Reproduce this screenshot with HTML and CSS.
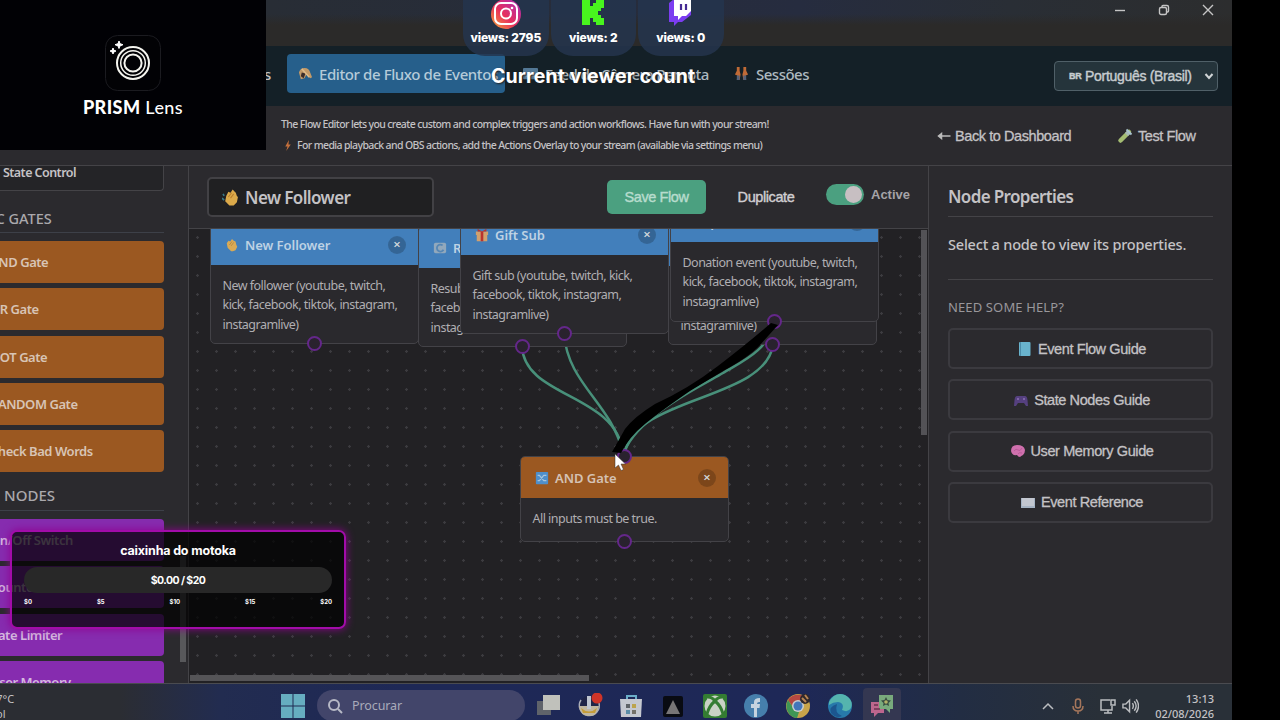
FILE: index.html
```html
<!DOCTYPE html>
<html lang="pt-BR">
<head>
    <meta charset="UTF-8">
    <meta name="viewport" content="width=device-width, initial-scale=1.0">
    <title>Editor de Fluxo de Eventos</title>
    <link rel="stylesheet" href="styles.css">
</head>
<body>

<div class="app">
    <!-- Window bar -->
    <div class="titlebar">
        <svg class="winbtn" viewBox="0 0 12 12"><path d="M1 6.5h10"/></svg>
        <svg class="winbtn" viewBox="0 0 12 12"><rect x="1.5" y="3.5" width="7" height="7" rx="1.5"/><path d="M4 3V2.5Q4 1.5 5 1.5h4q1.500 0 1.500 1.500v4q0 1-1 1H9"/></svg>
        <svg class="winbtn" viewBox="0 0 12 12"><path d="M1 1l10 10M11 1L1 11"/></svg>
    </div>

    <!-- Navigation -->
    <div class="nav">
        <span class="nav-prev">s</span>
        <div class="tab active">
            <svg class="emo" viewBox="0 0 16 16"><path d="M1 7q1-5 6-5 5 0 6 5l2 5-2 1-4-4-2 4-4 1z" fill="#c39a68"/><path d="M4 7l4 1-2 5-3-2z" fill="#3a2d2a"/><path d="M4 3l8 9" stroke="#e0bd8a" stroke-width="1.500"/></svg>
            <span class="t-tab">Editor de Fluxo de Eventos</span>
        </div>
        <div class="tab cam">
            <svg class="emo" viewBox="0 0 16 16"><rect x="0" y="2" width="16" height="12" rx="1" fill="#537895"/><path d="M2 12l4-5 3 3 2-2 3 4z" fill="#8199aa"/></svg>
            <span class="t-cam">Feed de Câmera Remota</span>
        </div>
        <div class="tab ses">
            <svg class="emo" viewBox="0 0 16 16"><path d="M3 1h3v4l1 4-1 6H3l.5-5L1 9l2-4zM10 1h3v4l2 4-2.500 1 .5 5h-3L9 9l1-4z" fill="#c06a36"/><path d="M3 10h3v5H3zM10 10h3v5h-3z" fill="#54627a"/></svg>
            <span class="t-ses">Sessões</span>
        </div>
        <div class="lang">
            <span class="flag">BR</span>
            <span class="t-lang">Português (Brasil)</span>
            <svg class="chev" viewBox="0 0 10 10"><path d="M1.500 3l3.500 4 3.500-4"/></svg>
        </div>
    </div>

    <!-- Description -->
    <div class="info">
        <div class="info-text">
            <div class="t-info">The Flow Editor lets you create custom and complex triggers and action workflows. Have fun with your stream!</div>
            <div class="info-line">
                <svg class="bolt" viewBox="0 0 8 12"><path d="M5 0L1 7h2.500L2 12l5-7H4.500z" fill="#c5703c"/></svg>
                <span class="t-info">For media playback and OBS actions, add the Actions Overlay to your stream (available via settings menu)</span>
            </div>
        </div>
        <div class="back">
            <svg class="arrow" viewBox="0 0 13 8"><path d="M4 1.500L1 4l3 2.500zM2 4h11" /></svg>
            <span>Back to Dashboard</span>
        </div>
        <div class="test">
            <svg class="tube" viewBox="0 0 16 16"><path d="M3.500 12.500L12 4" stroke="#a4bc72" stroke-width="4.500" stroke-linecap="round"/><path d="M9.500 6.500L12 4" stroke="#a7b9b7" stroke-width="4.500"/><path d="M9.500 1.500l5 5" stroke="#a9c3cf" stroke-width="1.800"/></svg>
            <span>Test Flow</span>
        </div>
    </div>

    <div class="main">
        <!-- Node palette -->
        <div class="sidebar">
            <div class="ctrl"><span>State Control</span></div>
            <h4 class="gates-title"><span>LOGIC GATES</span></h4>
            <div class="list">
                <div class="item gate"><span>AND Gate</span></div>
                <div class="item gate"><span>OR Gate</span></div>
                <div class="item gate"><span>NOT Gate</span></div>
                <div class="item gate"><span>RANDOM Gate</span></div>
                <div class="item gate"><span>Check Bad Words</span></div>
            </div>
            <h4 class="nodes-title"><span>STATE NODES</span></h4>
            <div class="list">
                <div class="item state"><span>On/Off Switch</span></div>
                <div class="item state"><span>Counter</span></div>
                <div class="item state"><span>Rate Limiter</span></div>
                <div class="item state"><span>User Memory</span></div>
            </div>
            <div class="side-scroll"></div>
        </div>

        <!-- Flow editor -->
        <div class="editor">
            <div class="toolbar">
                <div class="flow-name">
                    <svg class="emo" viewBox="0 0 16 16"><path d="M4 7l2-4 2 1 2-3 2 2 1 1 1 3 1 1-1 5-3 3H7l-4-4z" fill="#dba94a"/><path d="M6 8l3-4M8 9l3-4" stroke="#b97e2d"/><path d="M1 5l1 2M0 9l2 2" stroke="#397a88" stroke-width="1.500"/></svg>
                    <span class="t-flow">New Follower</span>
                </div>
                <div class="save"><span>Save Flow</span></div>
                <div class="dup"><span>Duplicate</span></div>
                <div class="switch"><div class="knob"></div></div>
                <span class="t-active">Active</span>
            </div>
            <div class="canvas">
                <svg class="wires" viewBox="189 229 740 454">
                    <path d="M522 346C524 398 615 393 623 452"/>
                    <path d="M564 334C568 384 610 402 623 452"/>
                    <path d="M774 321C770 350 741 362 723 373S640 414 624 452"/>
                    <path d="M773 345C765 400 637 396 625 452"/>
                </svg>

                <div class="node follower">
                    <div class="head blue">
                        <svg class="emo" viewBox="0 0 16 16"><path d="M2 6l2-3 2 1 2-3 2 2 2 1 1 4 1 2-2 4-3 1H7l-4-4z" fill="#d9aa55"/><path d="M5 8l3-4M7 9l3-4" stroke="#b3863f"/></svg>
                        <span>New Follower</span><i class="close">×</i>
                    </div>
                    <p>New follower (youtube, twitch,<br>kick, facebook, tiktok, instagram,<br>instagramlive)</p>
                    <b class="port out"></b>
                </div>

                <div class="node resub">
                    <div class="head blue">
                        <svg class="emo" viewBox="0 0 16 16"><rect x="1" y="2" width="14" height="12" rx="2" fill="#91a8bc"/><path d="M11 5a4 4 0 1 0 1 5" fill="none" stroke="#5586b4" stroke-width="2"/></svg>
                        <span>Resub</span>
                    </div>
                    <p>Resub (youtube, twitch,<br>facebook, tiktok,<br>instagramlive)</p>
                    <b class="port out"></b>
                </div>

                <div class="node gift">
                    <div class="head blue">
                        <svg class="emo" viewBox="0 0 16 16"><path d="M1 4h14v4H1zM2 8h12v7H2z" fill="#d1a06e"/><path d="M6.500 4h3v11h-3zM3 1l5 3 5-3v3H3z" fill="#b8322e"/></svg>
                        <span>Gift Sub</span><i class="close">×</i>
                    </div>
                    <p>Gift sub (youtube, twitch, kick,<br>facebook, tiktok, instagram,<br>instagramlive)</p>
                    <b class="port out"></b>
                </div>

                <div class="node under">
                    <div class="head blue"></div>
                    <p><br><br>instagramlive)</p>
                    <b class="port out"></b>
                </div>

                <div class="node donation">
                    <div class="head blue"><span class="t-dn">Superchat</span><i class="close">×</i></div>
                    <p>Donation event (youtube, twitch,<br>kick, facebook, tiktok, instagram,<br>instagramlive)</p>
                    <b class="port out"></b>
                </div>

                <div class="node and">
                    <div class="head orange">
                        <svg class="emo" viewBox="0 0 16 16"><rect x="1" y="1" width="14" height="14" rx="1" fill="#4f8fca"/><path d="M3 5h2l5 6h3M3 11h2l5-6h3" fill="none" stroke="#a8c6dd" stroke-width="1.300"/></svg>
                        <span>AND Gate</span><i class="close">×</i>
                    </div>
                    <p>All inputs must be true.</p>
                    <b class="port in"></b>
                    <b class="port out"></b>
                </div>

                <svg class="drag" viewBox="189 229 740 454">
                    <path d="M771 323Q748 343 718 366T655 404Q634 417 625 429L612 452L621 453Q629 437 645 424T690 391L723 371Q749 357 760 345L778 325Z"/>
                </svg>
                <div class="vscroll"></div>
                <div class="hscroll"></div>
            </div>
        </div>

        <!-- Properties -->
        <div class="props">
            <h3><span>Node Properties</span></h3>
            <div class="props-msg"><span>Select a node to view its properties.</span></div>
            <div class="help-title"><span>NEED SOME HELP?</span></div>
            <div class="guides">
                <div class="guide"><svg viewBox="0 0 14 16"><rect x="1" y="1" width="11.500" height="14" rx="1" fill="#69b3cd"/><path d="M2.500 1v14" stroke="#4b8ba8"/></svg><span>Event Flow Guide</span></div>
                <div class="guide"><svg viewBox="0 0 14 16"><path d="M3 4h8q2 0 2.500 4l.5 6h-2l-2-3H4l-2 3H0l.5-6Q1 4 3 4z" fill="#55407f"/><circle cx="4" cy="7" r="1" fill="#8c70b4"/><circle cx="10" cy="7" r="1" fill="#8c70b4"/></svg><span>State Nodes Guide</span></div>
                <div class="guide"><svg viewBox="0 0 14 16"><path d="M0 8q0-6 6-6 7 0 8 5 0 3-2 5-2 1-3 2-2 0-3-2-5 1-6-4z" fill="#cf70ad"/><path d="M3 8q2-3 4-1t4-2M7 11q1-2 4-1" fill="none" stroke="#b95a99"/></svg><span>User Memory Guide</span></div>
                <div class="guide"><svg viewBox="0 0 14 16"><path d="M0 4h14v10H0z" fill="#a6b4c4"/><path d="M1 4h6v8H1zM7 4h6v8H7z" fill="#c3c7d0"/></svg><span>Event Reference</span></div>
            </div>
        </div>
    </div>

    <!-- Taskbar -->
    <div class="taskbar">
        <div class="weather"><span>27°C</span><span>Sol</span></div>
        <svg class="win" viewBox="0 0 24 24"><path d="M0 0h11.500v11.500H0zM12.500 0H24v11.500H12.500zM0 12.500h11.500V24H0zM12.500 12.500H24V24H12.500z" fill="#66adc0"/></svg>
        <div class="search">
            <svg viewBox="0 0 16 16"><circle cx="7" cy="7" r="5"/><path d="M11 11l4 4"/></svg>
            <span>Procurar</span>
        </div>
        <div class="icons">
            <svg viewBox="0 0 26 26"><path d="M2 8h14v14H2z" fill="#5f636a"/><path d="M8 2h17v15H8z" fill="#c0c1bb"/></svg>
            <svg viewBox="0 0 26 26"><circle cx="12" cy="13" r="10" fill="#202548"/><path d="M4 7a10 10 0 1 0 18 3" fill="none" stroke="#a9adba" stroke-width="1.500"/><path d="M2 13h20q-1 10-10 10T2 13z" fill="#c0b6a0"/><path d="M4 15q8 7 16 0l-2 5H6z" fill="#c59c38"/><path d="M10 3h4v13h-4z" fill="#bfc5d0"/><circle cx="20" cy="5" r="5.500" fill="#cf3428"/></svg>
            <svg viewBox="0 0 26 26"><path d="M9 6V3h9v3" fill="none" stroke="#6caec9" stroke-width="2"/><path d="M2 6h22l-1 18H3z" fill="#c5c8d0"/><path d="M8 11h4v4H8z" fill="#5f6368"/><path d="M14 11h4v4h-4z" fill="#bca44e"/><path d="M8 17h4v4H8z" fill="#5a8da8"/><path d="M14 17h4v4h-4z" fill="#747169"/></svg>
            <svg viewBox="0 0 26 26"><rect x="3" y="3" width="20" height="21" rx="2" fill="#090b12"/><path d="M13 7l7 14H6z" fill="#777576"/></svg>
            <svg viewBox="0 0 26 26"><rect x="1" y="1" width="24" height="24" rx="2" fill="#347d32"/><circle cx="13" cy="13" r="10.500" fill="#c9d2c5"/><path d="M6 4q4 0 7 4 3-4 7-4M5 21q2-8 8-13 6 5 8 13" fill="none" stroke="#347d32" stroke-width="3"/></svg>
            <svg viewBox="0 0 26 26"><circle cx="13" cy="13" r="12" fill="#467fac"/><path d="M11 24v-9H8v-4h3V9q0-4 6-4v4q-3-.5-3 2h3l-.5 4H14v9z" fill="#c5d4df"/></svg>
            <svg viewBox="0 0 26 26"><circle cx="13" cy="13" r="12" fill="#c8a44a"/><path d="M3 7A12 12 0 0 1 23 7L13 8l-5 6z" fill="#b64841"/><path d="M3 7l6 9 5 3-2 6A12 12 0 0 1 3 7z" fill="#3f9655"/><circle cx="13" cy="13" r="6" fill="#cacdcf"/><circle cx="13" cy="13" r="4.500" fill="#4476ba"/><circle cx="20" cy="6" r="5" fill="#30292b"/><path d="M17 5l4 4M20 2l3 4" stroke="#b88553" stroke-width="2"/></svg>
            <svg viewBox="0 0 26 26"><circle cx="13" cy="13" r="12" fill="#277aab"/><path d="M2 9Q8-2 18 2q9 5 6 13-3 5-9 2 3-7-4-8-5 0-9 3z" fill="#55b4ae"/><path d="M10 11q-3 9 5 12-6 3-11-3-3-6 6-9z" fill="#1c568f"/></svg>
            <div class="running"><svg viewBox="0 0 26 26"><path d="M2 9h13v11H9l-4 4v-4H2z" fill="#bd668d"/><path d="M10 2h14v14h-3v4l-4-4h-7z" fill="#79aa7c"/><path d="M17 4l1.500 3 3.500.5-2.500 2.500.5 3-3-1.500-3 1.500.5-3-2.500-2.500 3.500-.5z" fill="#394c40"/><circle cx="17" cy="9" r="1.800" fill="#b2b267"/><path d="M5 12h4M5 16h6" stroke="#69334f" stroke-width="1.500"/></svg></div>
        </div>
        <div class="tray">
            <svg class="up" viewBox="0 0 12 16"><path d="M1 11l5-5 5 5"/></svg>
            <svg class="mic" viewBox="0 0 14 18"><rect x="4.500" y="2" width="5" height="9" rx="2.500"/><path d="M2 9q0 5 5 5t5-5M7 14v3"/></svg>
            <svg class="net" viewBox="0 0 18 18"><path d="M11 3H2v10h11V9M5 16h8M9 13v3"/><rect x="12" y="3" width="4" height="5"/></svg>
            <svg class="vol" viewBox="0 0 18 18"><path d="M1 7h3l4-4v12l-4-4H1zM11 6q2 3 0 6M13 4q4 5 0 10M15 2q5 7 0 14"/></svg>
            <div class="clock"><span>13:13</span><span>02/08/2026</span></div>
        </div>
    </div>
</div>

<!-- Camera overlay -->
<div class="lens">
    <svg class="lens-icon" viewBox="0 0 56 56"><rect x=".5" y=".5" width="55" height="55" rx="12" fill="#020205" stroke="#1b1b20"/><g fill="none" stroke="#f4f4ee" stroke-width="2"><circle cx="28" cy="28" r="16"/><circle cx="28" cy="28" r="12.300" stroke-width="1.500"/><circle cx="28" cy="28" r="8.600"/></g><path d="M14 6l1 2.700 3 1-3 1.200L14 13.500l-1-2.600-3-1.200 3-1zM8 13l.8 2.200 2.200.8-2.200 1L8 19l-.8-2L5 16l2.200-.8z" fill="#fff" stroke="#fff"/></svg>
    <div class="lens-name"><span><b>PRISM</b> Lens</span></div>
</div>

<!-- Viewer counters -->
<div class="views">
    <div class="pill">
        <svg viewBox="0 0 30 30"><defs><linearGradient id="ig" x1="0" y1="1" x2="1" y2="0"><stop offset="0" stop-color="#f7ad35"/><stop offset=".45" stop-color="#e72f5c"/><stop offset="1" stop-color="#a72fbe"/></linearGradient></defs><circle cx="15" cy="15" r="15" fill="url(#ig)"/><g fill="none" stroke="#fff" stroke-width="2"><rect x="4" y="4" width="22" height="21" rx="6"/><circle cx="15" cy="14.500" r="5"/></g><circle cx="21" cy="9" r="1.300" fill="#fff"/></svg>
        <span>views: 2795</span>
    </div>
    <div class="pill">
        <svg viewBox="0 0 30 30"><path d="M4 0h8v7h3V4h3V0h8v9h-3v3h-3v4h3v3h3v7h-8v-3h-3v-4h-3v7H4z" fill="#48f51e"/></svg>
        <span>views: 2</span>
    </div>
    <div class="pill">
        <svg viewBox="0 0 30 30"><path d="M3 4L8 0h17v16l-9 7h-4l-4 4v-4H3z" fill="#7b3df0"/><path d="M8 0h17v12l-5 5h-4l-4 4v-4H8z" fill="#fff"/><path d="M15 5v6M20 5v6" stroke="#452b93" stroke-width="2.200"/></svg>
        <span>views: 0</span>
    </div>
</div>
<div class="viewer-count"><span>Current viewer count</span></div>

<!-- Donation goal -->
<div class="goal">
    <div class="goal-title"><span>caixinha do motoka</span></div>
    <div class="goal-bar"><span>$0.00 / $20</span></div>
    <div class="marks"><span>$0</span><span>$5</span><span>$10</span><span>$15</span><span>$20</span></div>
</div>

<svg class="cursor" viewBox="0 0 12 19"><path d="M1 1v14l3.500-3 2.500 5.500 2.500-1L7 11h4.500z" fill="#fff" stroke="#333" stroke-width=".5"/></svg>

</body>
</html>
```
FILE: styles.css
```css
* {
    box-sizing: border-box;
}
body {
    margin: 0;
    width: 1280px;
    height: 720px;
    overflow: hidden;
    position: relative;
    background: #000;
    color: #c4c2c5;
    font-family: "Noto Sans", "Open Sans", sans-serif;
}
span {
    white-space: nowrap;
}
svg {
    flex: none;
    display: block;
}
.app {
    width: 1232px;
    height: 720px;
    display: flex;
    flex-direction: column;
    overflow: hidden;
}
.emo {
    width: 15px;
    height: 15px;
}

/* window bar */
.titlebar {
    height: 46px;
    flex: none;
    display: flex;
    justify-content: flex-end;
    gap: 32px;
    padding: 4px 18px 0 0;
    background: linear-gradient(to bottom, transparent 14px, #2b2a29 25px), linear-gradient(to right, #282d35 270px, #262c3f 800px, #292e35 1010px, #2c2d2e);
}
.winbtn {
    width: 12px;
    height: 12px;
    fill: none;
    stroke: #c5c5c5;
    stroke-width: 1.4;
}

/* navigation */
.nav {
    height: 60px;
    flex: none;
    display: flex;
    align-items: center;
    padding: 0 14px 5px 264px;
    background: #142027;
    font-size: 15px;
    font-weight: 500;
}
.nav-prev {
    width: 23px;
}
.tab {
    height: 39px;
    display: flex;
    align-items: center;
    gap: 7px;
    color: #aebac0;
}
.tab.active {
    width: 218px;
    padding-left: 11px;
    border-radius: 4px;
    background: #265f8b;
    color: #b5cbd9;
    gap: 6px;
}
.t-tab {
    letter-spacing: -0.4px;
}
.cam {
    width: 229px;
    padding-left: 18px;
}
.t-cam {
    letter-spacing: -0.55px;
}
.t-ses {
    letter-spacing: -0.5px;
}
.lang {
    width: 164px;
    height: 30px;
    margin: 4px 0 0 auto;
    display: flex;
    align-items: center;
    padding-left: 14px;
    border: 1px solid #506068;
    border-radius: 4px;
    background: #25343b;
    color: #c7cccf;
    font-family: "Liberation Sans", sans-serif;
    font-size: 14px;
    letter-spacing: -0.3px;
    -webkit-text-stroke: 0.4px;
}
.flag {
    width: 16px;
    font-size: 9px;
    font-weight: bold;
}
.chev {
    width: 10px;
    height: 10px;
    margin-left: auto;
    margin-right: 3px;
    fill: none;
    stroke: #d0d4d6;
    stroke-width: 2;
}

/* description */
.info {
    height: 60px;
    flex: none;
    display: flex;
    align-items: center;
    padding-left: 281px;
    background: #2b2a2e;
    border-bottom: 1px solid #444347;
}
.info-text {
    width: 656px;
    line-height: 21px;
    padding-bottom: 2px;
    white-space: nowrap;
    font-size: 10.5px;
    font-weight: 500;
}
.t-info {
    letter-spacing: -0.62px;
}
.info-line {
    display: flex;
    align-items: center;
    gap: 5px;
    padding-left: 3px;
}
.bolt {
    width: 8px;
    height: 11px;
}
.back, .test {
    display: flex;
    align-items: center;
    font-family: "Liberation Sans", sans-serif;
    font-size: 14.5px;
    letter-spacing: -0.42px;
    color: #c4c2c5;
    -webkit-text-stroke: 0.3px;
}
.back {
    width: 180px;
    gap: 4px;
}
.test {
    gap: 5px;
}
.arrow {
    width: 14px;
    height: 8px;
    fill: #bbb;
    stroke: #bbb;
    stroke-width: 1.5;
}
.tube {
    width: 16px;
    height: 16px;
}

.main {
    flex: 1;
    min-height: 0;
    display: flex;
    background: #2b2a2e;
}

/* palette */
.sidebar {
    width: 189px;
    flex: none;
    position: relative;
    overflow: hidden;
    padding-right: 24px;
    border-right: 1px solid #444347;
}
.ctrl {
    width: 164px;
    height: 25px;
    padding: 1px 0 0 3px;
    line-height: 12px;
    font-size: 12.5px;
    font-weight: 600;
    letter-spacing: -0.55px;
    background: #242427;
    border: 1px solid #444347;
    border-width: 0 1px 1px 0;
    border-radius: 0 0 4px 0;
}
.sidebar h4 {
    margin: 0 0 8px;
    width: 164px;
    font-size: 14.5px;
    font-weight: 500;
    color: #aaa8ac;
    border-bottom: 1px solid #3d4048;
}
.gates-title {
    height: 42px;
    line-height: 54px;
    text-indent: -39px;
}
.nodes-title {
    height: 39px;
    line-height: 46px;
    text-indent: -41px;
}
.sidebar .nodes-title {
    font-size: 15px;
}
.list {
    display: flex;
    flex-direction: column;
    gap: 5.3px;
    width: 164px;
}
.item {
    height: 42px;
    flex: none;
    line-height: 42px;
    border-radius: 0 4px 4px 0;
    font-size: 13px;
    font-weight: 600;
    letter-spacing: -0.45px;
    text-indent: -10px;
    color: #d8c4b5;
}
.gate {
    background: #9b5821;
}
.state {
    background: #862caf;
    color: #d5b8df;
}
.side-scroll {
    position: absolute;
    left: 180px;
    top: 390px;
    width: 6px;
    height: 106px;
    background: #58585b;
}

/* editor */
.editor {
    width: 740px;
    flex: none;
    display: flex;
    flex-direction: column;
    border-right: 1px solid #444347;
}
.toolbar {
    height: 63px;
    flex: none;
    display: flex;
    align-items: center;
    padding-left: 18px;
    border-bottom: 1px solid #444347;
}
.flow-name {
    width: 227px;
    height: 40px;
    display: flex;
    align-items: center;
    gap: 6px;
    padding-left: 13px;
    background: #202022;
    border: 2px solid #424145;
    border-radius: 5px;
    font-size: 17px;
    font-weight: 600;
}
.t-flow {
    letter-spacing: -0.6px;
}
.flow-name .emo {
    width: 17px;
    height: 18px;
}
.save, .dup {
    height: 34px;
    display: flex;
    align-items: center;
    justify-content: center;
    font-family: "Liberation Sans", sans-serif;
    font-size: 14.5px;
    letter-spacing: -0.4px;
    -webkit-text-stroke: 0.4px;
}
.save {
    width: 99px;
    margin-left: 173px;
    background: #4ba080;
    border-radius: 5px;
    color: #b7dccd;
}
.dup {
    width: 120px;
    color: #d0ced1;
}
.switch {
    width: 38px;
    height: 21px;
    margin: -5px 7px 0 0;
    padding: 2px;
    display: flex;
    justify-content: flex-end;
    border-radius: 11px;
    background: #4ba080;
}
.knob {
    width: 17px;
    height: 17px;
    border-radius: 50%;
    background: #c7bfc2;
}
.t-active {
    font-family: "Liberation Sans", sans-serif;
    font-size: 13px;
    font-weight: bold;
    color: #a5a3a7;
    margin-top: -5px;
}
.canvas {
    flex: 1;
    min-height: 0;
    position: relative;
    overflow: hidden;
    background-color: #222124;
    background-image: radial-gradient(circle, #3c3b3f 1px, transparent 1.5px);
    background-size: 19px 19px;
    background-position: -1px -1px;
}
.wires, .drag {
    position: absolute;
    left: 0;
    top: 0;
    width: 740px;
    height: 454px;
}
.wires path {
    fill: none;
    stroke: #48907a;
    stroke-width: 2.5;
}
.drag path {
    fill: #000;
}
.node {
    position: absolute;
    width: 209px;
    background: #2a292d;
    border: 1px solid #434247;
    border-radius: 5px;
}
.follower { left: 21px; top: -6px; height: 121px; }
.resub { left: 229px; top: -3px; height: 121px; }
.gift { left: 271px; top: -16px; height: 121px; }
.under { left: 479px; top: -5px; height: 121px; }
.donation { left: 481px; top: -29px; height: 122px; }
.and { left: 331px; top: 227px; height: 86px; }
.head {
    height: 41px;
    display: flex;
    align-items: center;
    gap: 6px;
    padding: 0 12px 0 14px;
    border-radius: 4px 4px 0 0;
    font-size: 13px;
    font-weight: 600;
    letter-spacing: -0.05px;
    color: #bed2e4;
}
.head .emo {
    width: 14px;
    height: 14px;
}
.blue {
    background: #427fbb;
}
.orange {
    background: #9b5821;
    color: #d5c2b4;
}
.t-dn {
    padding-left: 10px;
}
.close {
    width: 18px;
    height: 18px;
    margin-left: auto;
    border-radius: 50%;
    background: rgba(0, 0, 0, 0.2);
    color: #d3d7dc;
    font-style: normal;
    font-size: 13px;
    line-height: 17px;
    text-align: center;
}
.node p {
    margin: 0;
    padding: 11px 0 0 11.5px;
    font-size: 12.5px;
    line-height: 19.4px;
    letter-spacing: -0.52px;
    color: #b0aeb2;
    white-space: nowrap;
}
.port {
    position: absolute;
    left: 96px;
    width: 15px;
    height: 15px;
    border: 2px solid #64278a;
    border-radius: 50%;
    background: #29222e;
}
.out {
    bottom: -8px;
}
.in {
    top: -8px;
}
.vscroll {
    position: absolute;
    right: 1px;
    top: 1px;
    width: 6px;
    height: 205px;
    background: #535256;
}
.hscroll {
    position: absolute;
    left: 1px;
    bottom: 2px;
    width: 399px;
    height: 6px;
    background: #555457;
}

/* properties */
.props {
    flex: 1;
    padding: 10px 19px 0;
}
.props h3 {
    height: 41px;
    margin: 0;
    line-height: 41px;
    font-size: 17px;
    font-weight: 600;
    letter-spacing: -0.65px;
    border-bottom: 1px solid #444347;
}
.props-msg {
    height: 63px;
    line-height: 55px;
    font-size: 14.5px;
    font-weight: 500;
    letter-spacing: -0.2px;
    border-bottom: 1px solid #444347;
}
.help-title {
    height: 48px;
    line-height: 55px;
    font-size: 13px;
    letter-spacing: 0.13px;
    color: #99979b;
}
.guides {
    display: flex;
    flex-direction: column;
    gap: 10.3px;
}
.guide {
    height: 41px;
    display: flex;
    align-items: center;
    justify-content: center;
    gap: 6px;
    padding-left: 3px;
    border: 2px solid #3b3a3f;
    border-radius: 5px;
    font-family: "Liberation Sans", sans-serif;
    font-size: 14.5px;
    letter-spacing: -0.4px;
    -webkit-text-stroke: 0.3px;
}
.guide svg {
    width: 14px;
    height: 16px;
}

/* taskbar */
.taskbar {
    height: 37px;
    flex: none;
    display: flex;
    align-items: center;
    padding-top: 7px;
    border-top: 1px solid #4a4b50;
    background: linear-gradient(to right, #2b2d33 120px, #222c50 220px, #1e2856 400px, #1e2857 800px, #222d43 960px, #293038 1100px);
}
.weather {
    width: 281px;
    display: flex;
    flex-direction: column;
    font-size: 11px;
    line-height: 15px;
    text-indent: -10px;
}
.win {
    width: 24px;
    height: 24px;
}
.search {
    width: 208px;
    height: 31px;
    margin-left: 12px;
    display: flex;
    align-items: center;
    gap: 9px;
    padding-left: 10px;
    border-radius: 16px;
    background: #42456a;
    font-size: 12.5px;
    letter-spacing: -0.1px;
    color: #a9abba;
}
.search svg {
    width: 16px;
    height: 16px;
    fill: none;
    stroke: #b7b9c6;
    stroke-width: 2;
}
.icons {
    display: flex;
    align-items: center;
    gap: 15.7px;
    margin-left: 10px;
}
.icons svg {
    width: 26px;
    height: 26px;
}
.running {
    width: 38px;
    height: 36px;
    display: flex;
    align-items: center;
    justify-content: center;
    margin-left: -6px;
    border-radius: 4px;
    background: #343751;
}
.tray {
    margin-left: auto;
    padding-right: 18px;
    display: flex;
    align-items: center;
}
.tray svg {
    fill: none;
    stroke: #bbbdc0;
    stroke-width: 1.5;
}
.up { width: 12px; height: 16px; margin-right: 17px; }
.tray .mic { width: 14px; height: 18px; margin-right: 14px; stroke: #a5765b; }
.net { width: 18px; height: 18px; margin-right: 5px; }
.vol { width: 17px; height: 18px; }
.clock {
    width: 75px;
    display: flex;
    flex-direction: column;
    align-items: flex-end;
    font-size: 11px;
    font-weight: 500;
    line-height: 15px;
}

/* overlays */
.lens {
    position: absolute;
    left: 0;
    top: 0;
    width: 266px;
    height: 150px;
    padding-top: 35px;
    background: #010105;
    display: flex;
    flex-direction: column;
    align-items: center;
}
.lens-icon {
    width: 56px;
    height: 56px;
}
.lens-name {
    margin-top: 5px;
    font-family: Lato, sans-serif;
    font-size: 18px;
    font-weight: 500;
    letter-spacing: 0.4px;
    line-height: 22px;
    color: #fff;
}
.lens-name b {
    font-weight: 900;
}
.views {
    position: absolute;
    left: 463px;
    top: -20px;
    display: flex;
    gap: 2px;
}
.pill {
    width: 85.5px;
    height: 76px;
    display: flex;
    flex-direction: column;
    align-items: center;
    padding-top: 19px;
    border-radius: 22px;
    background: rgba(37, 53, 78, 0.85);
    font-family: Inter, sans-serif;
    font-weight: 800;
    font-size: 12px;
    letter-spacing: -0.15px;
    line-height: 17px;
    color: #fff;
}
.pill svg {
    width: 30px;
    height: 30px;
}
.viewer-count {
    position: absolute;
    left: 491px;
    top: 63px;
    font-family: Inter, sans-serif;
    font-size: 19.5px;
    line-height: 26px;
    font-weight: 700;
    letter-spacing: 0.15px;
    color: #fff;
    text-shadow: 1px 1px 2px #222;
}
.goal {
    position: absolute;
    left: 10px;
    top: 530px;
    width: 336px;
    height: 99px;
    padding: 10px 12px 0;
    background: rgba(0, 0, 0, 0.72);
    border: 2px solid #a20ca9;
    border-radius: 7px;
    box-shadow: 0 0 8px #8e008f;
    font-family: Inter, sans-serif;
    font-weight: 700;
    color: #fff;
    text-align: center;
}
.goal-title {
    height: 25px;
    line-height: 17px;
    font-size: 12.5px;
    letter-spacing: -0.17px;
}
.goal-bar {
    height: 26px;
    border-radius: 13px;
    background: #282828;
    font-size: 10.5px;
    letter-spacing: -0.55px;
    line-height: 27px;
}
.marks {
    display: flex;
    justify-content: space-between;
    padding-top: 5px;
    font-size: 6px;
    line-height: 8px;
}
.cursor {
    position: absolute;
    left: 614px;
    top: 453px;
    width: 12px;
    height: 19px;
}
```
